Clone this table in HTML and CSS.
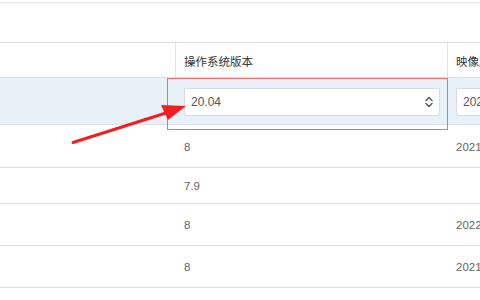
FILE: index.html
```html
<!DOCTYPE html>
<html lang="zh">
<head>
<meta charset="utf-8">
<link rel="stylesheet" href="styles.css">
</head>
<body>
<div class="page">
  <div class="topline"></div>
  <div class="spacer"></div>
  <div class="table">
    <div class="row head">
      <div class="cell c1 hc"></div>
      <div class="cell c2 hc">操作系统版本</div>
      <div class="cell c3 hc">映像版本</div>
    </div>
    <div class="row editing">
      <div class="cell c1"></div>
      <div class="cell c2">
        <div class="input">
          <span>20.04</span>
          <svg class="spin" width="8" height="12" viewBox="0 0 8 12"><path d="M1 4.5 L4 1.5 L7 4.5 M1 7.5 L4 10.5 L7 7.5" fill="none" stroke="#555" stroke-width="1.4" stroke-linecap="round" stroke-linejoin="round"/></svg>
        </div>
      </div>
      <div class="cell c3">
        <div class="input small"><span>2022</span></div>
      </div>
    </div>
    <div class="row r2">
      <div class="cell c1"></div>
      <div class="cell c2">8</div>
      <div class="cell c3">2021</div>
    </div>
    <div class="row r3">
      <div class="cell c1"></div>
      <div class="cell c2">7.9</div>
      <div class="cell c3"></div>
    </div>
    <div class="row r4">
      <div class="cell c1"></div>
      <div class="cell c2">8</div>
      <div class="cell c3">2022</div>
    </div>
    <div class="row r4">
      <div class="cell c1"></div>
      <div class="cell c2">8</div>
      <div class="cell c3">2021</div>
    </div>
  </div>
  <div class="highlight"></div>
  <svg class="arrow" width="480" height="300" viewBox="0 0 480 300">
    <path d="M73 142.5 L166 113" stroke="#f02020" stroke-width="3" stroke-linecap="round"/>
    <path d="M186 106 L161 105 L168 120 Z" fill="#f02020"/>
  </svg>
</div>
</body>
</html>
```
FILE: styles.css
```css
* { box-sizing: border-box; }
html, body { margin: 0; padding: 0; background: #fff; }
body { font-family: "Liberation Sans", Arial, "Noto Sans CJK SC", sans-serif; color: #666; }
.page { position: relative; width: 480px; height: 300px; overflow: hidden; }
.topline { height: 3px; border-bottom: 1px solid #e3e6ea; }
.spacer { height: 39px; }
.table { width: 560px; border-top: 1px solid #dde1e6; }
.row { display: grid; grid-template-columns: 176px 272px 112px; border-bottom: 1px solid #dde1e6; }
.cell { display: flex; align-items: center; padding-left: 8px; font-size: 11.5px; }
.head { height: 35px; }
.hc { border-right: 1px solid #e1e4e8; color: #333; font-size: 11.5px; padding-top: 1px; }
.editing { height: 47px; background: #e8f0f8; }
.editing .cell { padding-left: 8px; padding-top: 1px; }
.input { width: 256px; height: 28px; background: #fff; border: 1px solid #d6dce3; border-radius: 2px; display: flex; align-items: center; justify-content: space-between; padding: 0 6px 0 6px; font-size: 12px; color: #555; }
.input.small { width: 100px; }
.r2 { height: 43px; padding-bottom: 1px; }
.r2 .cell { align-items: flex-start; padding-top: 16px; }
.r3 { height: 36px; }
.r4 { height: 42px; }
.highlight { position: absolute; left: 167px; top: 78px; width: 281px; height: 52px; border: 1px solid #f07070; }
.arrow { position: absolute; left: 0; top: 0; pointer-events: none; }
```
